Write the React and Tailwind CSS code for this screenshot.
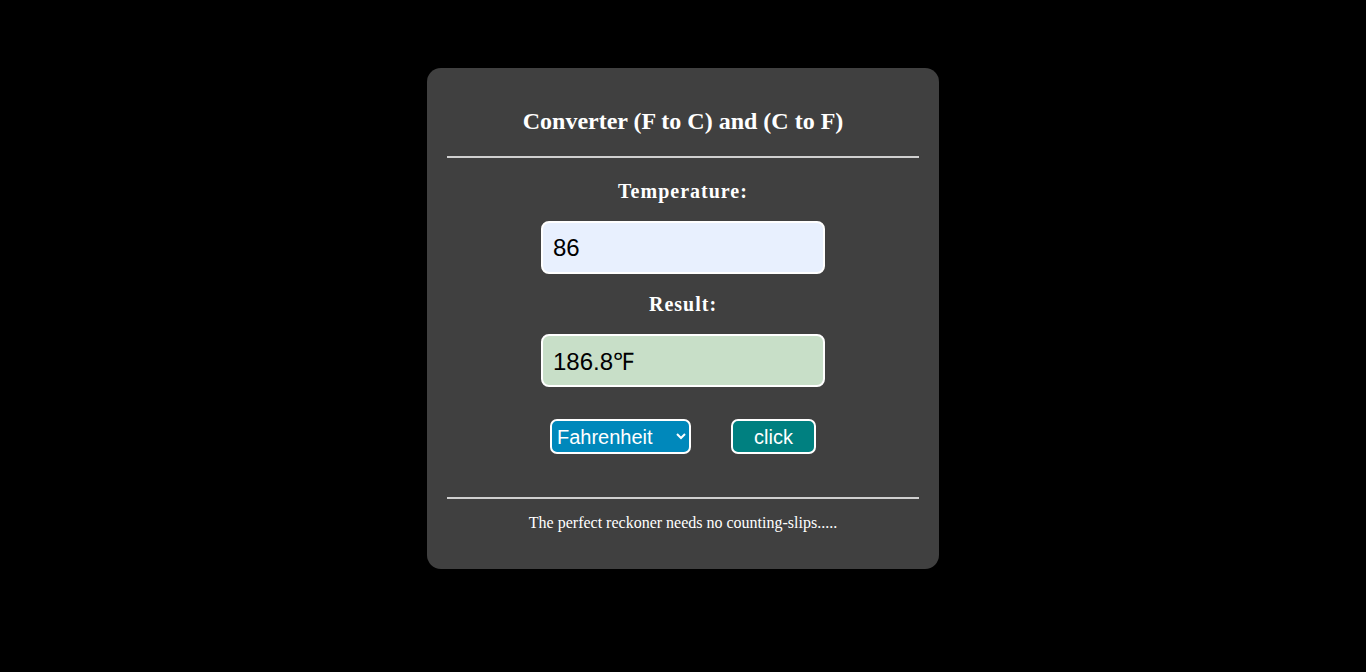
export default function App() {
  return (
    <div className="min-h-screen bg-black pt-[68px]">
      <div className="mx-auto w-[512px] h-[501px] rounded-[14px] bg-[#404040] px-5 pt-[39px] flex flex-col items-center text-white">
        <h2 className="font-['Liberation_Serif',serif] font-bold text-[24px] leading-[28px]">
          Converter (F to C) and (C to F)
        </h2>
        <div className="w-full h-[2px] bg-[#d0d0d0] mt-[21px]" />
        <label className="mt-[21px] font-['Liberation_Serif',serif] font-bold text-[20px] leading-[24px] tracking-[1px]">
          Temperature:
        </label>
        <input
          defaultValue="86"
          className="mt-[18px] w-[284px] h-[53px] rounded-lg border-2 border-white bg-[#e8f0fe] px-[10px] text-black text-[24px] font-['Liberation_Sans',sans-serif] outline-none"
        />
        <label className="mt-[18px] font-['Liberation_Serif',serif] font-bold text-[20px] leading-[24px] tracking-[1px]">
          Result:
        </label>
        <input
          defaultValue="186.8℉"
          readOnly
          className="mt-[18px] w-[284px] h-[53px] rounded-lg border-2 border-white bg-[#c8dfc8] px-[10px] text-black text-[24px] font-['Liberation_Sans',sans-serif] outline-none"
        />
        <div className="mt-[32px] flex items-center gap-[40px]">
          <select className="w-[141px] h-[35px] rounded-[7px] border-2 border-white bg-[#0088bb] text-white text-[20px] font-['Liberation_Sans',sans-serif] pl-[1px] outline-none">
            <option>Fahrenheit</option>
            <option>Celsius</option>
          </select>
          <button className="w-[85px] h-[35px] rounded-[7px] border-2 border-white bg-[#008080] text-white text-[20px] font-['Liberation_Sans',sans-serif]">
            click
          </button>
        </div>
        <div className="w-full h-[2px] bg-[#d0d0d0] mt-[43px]" />
        <p className="mt-[14px] font-['Liberation_Serif',serif] text-[16px] leading-[20px]">
          The perfect reckoner needs no counting-slips.....
        </p>
      </div>
    </div>
  );
}
